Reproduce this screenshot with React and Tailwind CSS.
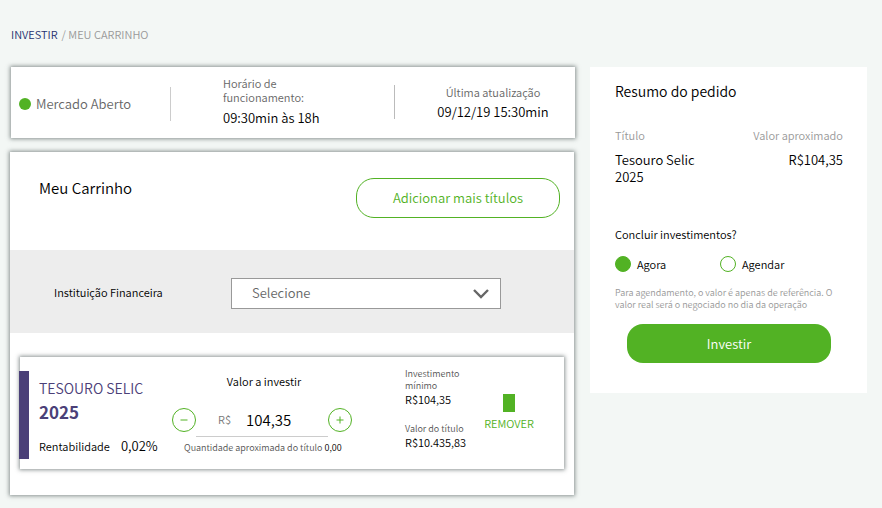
import { useState } from "react";

const raised = "bg-white shadow-[0_0_4px_1px_rgba(80,90,90,0.65)]";

function Breadcrumb() {
  return (
    <nav className="flex gap-1 text-[11px] leading-4 text-[#999]">
      <a href="#investir" className="text-[#25306f]">INVESTIR</a>
      <span>/ MEU CARRINHO</span>
    </nav>
  );
}

function MarketStatus() {
  return (
    <section className={`grid grid-cols-[160fr_223fr_181fr] items-center pt-[9px] pb-[10px] ${raised}`}>
      <div className="flex items-center gap-[5px] pt-1 pl-2">
        <span className="size-3 rounded-full bg-[#52b224]" />
        <span className="text-[13px] leading-5 text-[#666]">Mercado Aberto</span>
        <span className="ml-auto h-[34px] w-px bg-[#ccc]" />
      </div>
      <div className="pl-[52px]">
        <p className="w-24 text-[11px] leading-[14px] text-[#666]">Horário de funcionamento:</p>
        <p className="mt-1 text-[13px] leading-5 text-black">09:30min às 18h</p>
      </div>
      <div className="flex items-center">
        <span className="h-[34px] w-px bg-[#bbb]" />
        <div className="flex-1 pl-4 text-center">
          <p className="text-[11px] leading-5 text-[#666]">Última atualização</p>
          <p className="text-[13px] leading-5 text-black">09/12/19 15:30min</p>
        </div>
      </div>
    </section>
  );
}

function InstitutionPicker() {
  return (
    <div className="flex items-center bg-[#ededed] pt-7 pb-6 pl-11">
      <label htmlFor="institution" className="w-[177px] pb-1 text-[11px] leading-4 text-black">
        Instituição Financeira
      </label>
      <div className="relative w-[270px]">
        <select
          id="institution"
          className="block h-[31px] w-full appearance-none border border-[#999] bg-white pb-[2px] pl-5 text-[13px] text-[#666]"
        >
          <option>Selecione</option>
        </select>
        <svg
          viewBox="0 0 16 10"
          className="pointer-events-none absolute top-[11px] right-3 h-[10px] w-4"
          fill="none"
          stroke="#666"
          strokeWidth="2.4"
        >
          <path d="M1 1 L8 8 L15 1" />
        </svg>
      </div>
    </div>
  );
}

function StepButton({ label, onClick, plus }) {
  return (
    <button
      type="button"
      aria-label={label}
      onClick={onClick}
      className="flex size-6 items-center justify-center rounded-full border border-[#52b224]"
    >
      <svg viewBox="0 0 8 8" className="size-2" stroke="#52b224" strokeWidth="1">
        <path d={plus ? "M0.5 4 H7.5 M4 0.5 V7.5" : "M0.5 4 H7.5"} />
      </svg>
    </button>
  );
}

function CartItem() {
  const [cents, setCents] = useState(10435);
  const shown = (cents / 100).toFixed(2).replace(".", ",");
  return (
    <article className={`mx-[10px] mt-6 mb-[26px] flex h-28 ${raised}`}>
      <span className="-ml-px mt-[14px] h-[88px] w-[10px] bg-[#4b4078]" />
      <div className="w-[143px] pt-[19px] pl-[10px]">
        <h3 className="text-[#4b4078]">
          <span className="block text-[14px] leading-6">TESOURO SELIC</span>
          <strong className="block text-[17px] leading-6">2025</strong>
        </h3>
        <p className="mt-3 flex gap-[11px] leading-5 text-black">
          <span className="text-[11px]">Rentabilidade</span>
          <span className="text-[13px]">0,02%</span>
        </p>
      </div>
      <div className="w-[184px] pt-[14px]">
        <label htmlFor="amount" className="block text-center text-[11px] leading-5 text-black">
          Valor a investir
        </label>
        <div className="mt-3 flex w-[180px] items-center">
          <StepButton label="Diminuir" onClick={() => setCents(Math.max(0, cents - 10435))} />
          <div className="flex h-[34px] flex-1 items-center border-b border-[#ccc] pl-[22px]">
            <span className="w-7 text-[11px] text-[#777]">R$</span>
            <input id="amount" value={shown} readOnly className="w-16 text-[15px] leading-5 text-black" />
          </div>
          <StepButton label="Aumentar" onClick={() => setCents(cents + 10435)} plus />
        </div>
        <p className="pl-3 text-[9px] leading-[22px] whitespace-nowrap text-[#555]">
          Quantidade aproximada do título <span className="text-black">0,00</span>
        </p>
      </div>
      <dl className="ml-[49px] w-20 pt-[11px] text-[9px] leading-3 text-[#555]">
        <dt className="w-16">Investimento mínimo</dt>
        <dd className="text-[11px] leading-[14px] text-black">R$104,35</dd>
        <dt className="mt-[17px]">Valor do título</dt>
        <dd className="text-[11px] leading-[14px] text-black">R$10.435,83</dd>
      </dl>
      <button type="button" className="mt-[37px] flex w-12 flex-col items-center gap-[3px] self-start text-[11px] leading-4 text-[#52b224]">
        <span className="h-[18px] w-3 bg-[#52b224]" />
        REMOVER
      </button>
    </article>
  );
}

function Cart() {
  return (
    <section className={`mr-px -ml-px flow-root ${raised}`}>
      <header className="flex items-start justify-between pt-[26px] pr-[14px] pb-8 pl-[29px]">
        <h2 className="text-[15px] leading-5 text-black">Meu Carrinho</h2>
        <button
          type="button"
          className="h-10 w-[204px] rounded-[18px] border border-[#52b224] text-[13px] text-[#52b224]"
        >
          Adicionar mais títulos
        </button>
      </header>
      <InstitutionPicker />
      <CartItem />
    </section>
  );
}

function WhenOption({ id, label, checked, onChange }) {
  return (
    <div className="flex w-[105px] items-center gap-[6px]">
      <input
        type="radio"
        name="when"
        id={id}
        checked={checked}
        onChange={onChange}
        className="size-4 appearance-none rounded-full border border-[#52b224] checked:bg-[#52b224]"
      />
      <label htmlFor={id} className="text-[11px] leading-4 text-black">{label}</label>
    </div>
  );
}

function OrderSummary() {
  const [when, setWhen] = useState("agora");
  return (
    <aside className="w-[277px] shrink-0 bg-white pt-3 pr-6 pb-[30px] pl-[25px]">
      <h2 className="text-[14px] leading-6 text-black">Resumo do pedido</h2>
      <table className="mt-6 w-full">
        <thead>
          <tr className="text-[11px] leading-4 text-[#999]">
            <th className="text-left font-[350]">Título</th>
            <th className="text-right font-[350]">Valor aproximado</th>
          </tr>
        </thead>
        <tbody>
          <tr className="align-top text-[13px] leading-[17px] text-black">
            <td className="w-24 pt-2">Tesouro Selic 2025</td>
            <td className="pt-2 text-right">R$104,35</td>
          </tr>
        </tbody>
      </table>
      <fieldset className="mt-[41px]">
        <legend className="text-[11px] leading-4 text-black">Concluir investimentos?</legend>
        <div className="mt-[14px] flex">
          <WhenOption id="agora" label="Agora" checked={when === "agora"} onChange={() => setWhen("agora")} />
          <WhenOption id="agendar" label="Agendar" checked={when === "agendar"} onChange={() => setWhen("agendar")} />
        </div>
      </fieldset>
      <p className="mt-[15px] text-[9px] leading-3 text-[#999]">
        Para agendamento, o valor é apenas de referência. O valor real será o negociado no dia da operação
      </p>
      <button type="button" className="mx-auto mt-[13px] block h-[39px] w-[204px] rounded-[16px] bg-[#52b224] text-[13px] text-white">
        Investir
      </button>
    </aside>
  );
}

export default function App() {
  return (
    <div className="min-h-screen bg-[#f3f7f5] pt-[26px] pr-[15px] pb-3 pl-[11px] font-['Noto_Sans_CJK_SC','Noto_Sans',sans-serif] font-[350]">
      <Breadcrumb />
      <div className="mt-[25px] flex items-start gap-[15px]">
        <main className="flex min-w-0 flex-1 flex-col gap-[14px]">
          <MarketStatus />
          <Cart />
        </main>
        <OrderSummary />
      </div>
    </div>
  );
}
